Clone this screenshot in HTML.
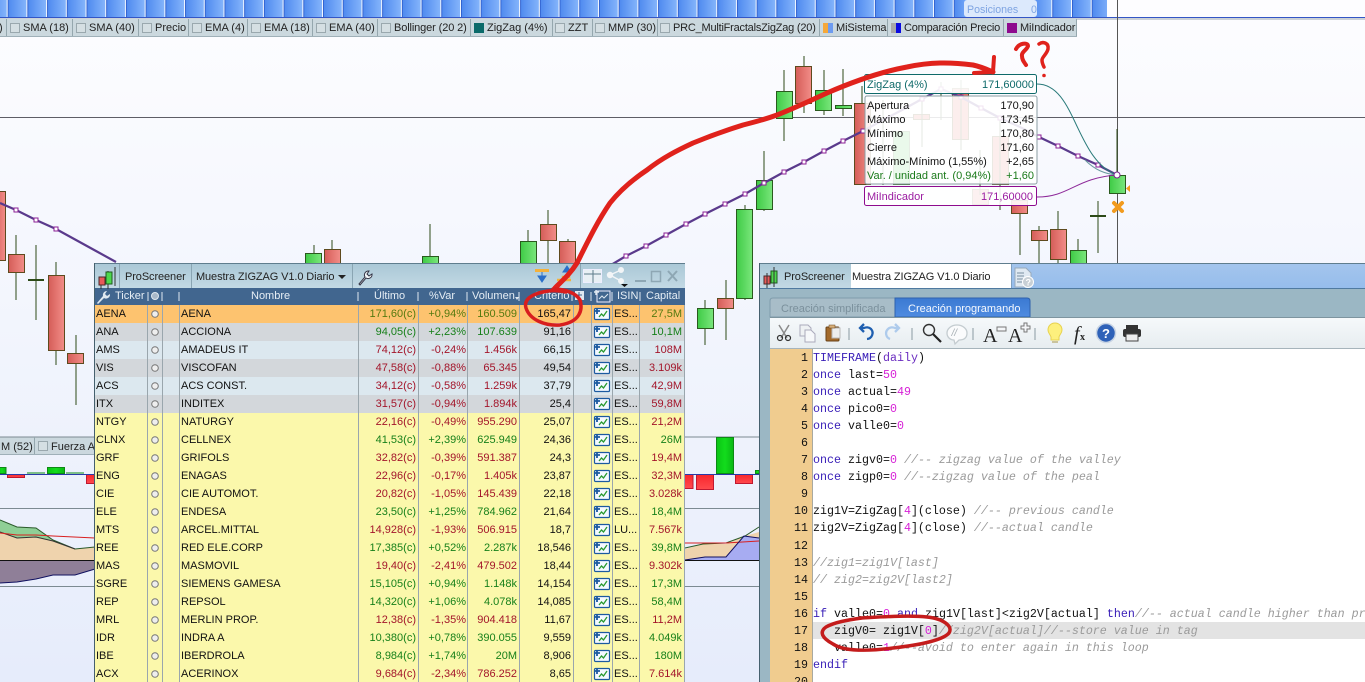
<!DOCTYPE html>
<html><head><meta charset="utf-8"><title>ProScreener</title>
<style>
html,body{margin:0;padding:0;background:#fff}
#p{position:relative;width:1365px;height:682px;overflow:hidden;font:11px "Liberation Sans",sans-serif;color:#111}
svg{position:absolute;left:0;top:0;display:block}
.tb{position:absolute;top:20px;height:17px;line-height:17px;white-space:nowrap;color:#222}
#l{position:absolute;left:95px;top:305px;width:590px;height:377px}
.r{position:absolute;left:0;width:590px;height:18px;line-height:18px;white-space:nowrap}
.r span{position:absolute;top:0}
.y{background:#fbf8ab}.g{background:#d3d7db}.b{background:#dce8ef}.o{background:#fdc36f}
.t{left:1px}.n{left:86px}.u{right:269px}.v{right:219px}.w{right:168px}.k{right:114px}.s{left:519px}.m{right:3px}
.up{color:#17801a}.dn{color:#a3152a}
.o .up{color:#557a10}
.hd{position:absolute;top:288px;height:17px;line-height:17px;color:#e6eef5;white-space:nowrap;font-size:11px}
pre{position:absolute;margin:0;font:11.67px/17.05px "Liberation Mono",monospace;color:#111}
.kw{color:#3a20b8}.nm{color:#d61fd6}.cm{color:#9a9a9a;font-style:italic}.pu{color:#6a2cc0}
#code{left:813px;top:350px;width:552px;height:332px;overflow:hidden}
#nums{left:770px;top:350px;width:38px;text-align:right}
</style></head><body><div id="p">
<svg width="1365" height="682" viewBox="0 0 1365 682" style="z-index:0">
<defs>
<linearGradient id="bg" x1="0" y1="0" x2="0" y2="1"><stop offset="0" stop-color="#fdfdff"/><stop offset="1" stop-color="#e6ecfb"/></linearGradient>
<linearGradient id="cg" x1="0" y1="0" x2="1" y2="0"><stop offset="0" stop-color="#3fcb46"/><stop offset="1" stop-color="#7ae67c"/></linearGradient>
<linearGradient id="cr" x1="0" y1="0" x2="1" y2="0"><stop offset="0" stop-color="#d55d58"/><stop offset="1" stop-color="#f28d88"/></linearGradient>
<linearGradient id="hg" x1="0" y1="0" x2="1" y2="0"><stop offset="0" stop-color="#0bc315"/><stop offset=".5" stop-color="#12dc1c"/><stop offset="1" stop-color="#0bb814"/></linearGradient>
<linearGradient id="hr" x1="0" y1="0" x2="0" y2="1"><stop offset="0" stop-color="#f8262c"/><stop offset="1" stop-color="#ff4a4e"/></linearGradient>
<linearGradient id="tile" x1="0" y1="0" x2="1" y2="0"><stop offset="0" stop-color="#4a86ee"/><stop offset="1" stop-color="#84b4fb"/></linearGradient>
<pattern id="tp" x="6.67" y="0" width="19.71" height="17" patternUnits="userSpaceOnUse"><rect width="19.71" height="17" fill="url(#tile)"/><rect x="0" width="1" height="17" fill="#f4f8ff"/><rect x="1" width=".9" height="17" fill="#2f5fcc"/></pattern>
</defs>
<rect width="1365" height="682" fill="url(#bg)"/>
<rect x="0" y="0" width="1107" height="17" fill="url(#tp)"/>
<rect x="0" y="17" width="1365" height="1" fill="#3356c6"/>
<rect x="0" y="18.5" width="1365" height="1" fill="#9aa6b0"/>
<rect x="0" y="19" width="1077" height="17" fill="#cbd8de"/>
<rect x="0" y="36" width="1077" height="1" fill="#9fb0b8"/>
<g fill="#95a7ae"><rect x="6" y="19" width="1" height="17"/><rect x="72" y="19" width="1" height="17"/><rect x="138" y="19" width="1" height="17"/><rect x="188" y="19" width="1" height="17"/><rect x="247" y="19" width="1" height="17"/><rect x="312" y="19" width="1" height="17"/><rect x="377" y="19" width="1" height="17"/><rect x="470" y="19" width="1" height="17"/><rect x="552" y="19" width="1" height="17"/><rect x="592" y="19" width="1" height="17"/><rect x="657" y="19" width="1" height="17"/><rect x="819" y="19" width="1" height="17"/><rect x="887" y="19" width="1" height="17"/><rect x="1003" y="19" width="1" height="17"/><rect x="1076" y="19" width="1" height="17"/></g>
<g fill="#d5dfe3" stroke="#9aa8ae"><rect x="10.5" y="23.500" width="9" height="9"/><rect x="76.5" y="23.5" width="9" height="9"/><rect x="142.5" y="23.5" width="9" height="9"/><rect x="192.5" y="23.5" width="9" height="9"/><rect x="251.5" y="23.5" width="9" height="9"/><rect x="316.5" y="23.5" width="9" height="9"/><rect x="381.5" y="23.5" width="9" height="9"/><rect x="555.5" y="23.5" width="9" height="9"/><rect x="595.5" y="23.5" width="9" height="9"/><rect x="660.5" y="23.5" width="9" height="9"/></g>
<rect x="474" y="23" width="10" height="10" fill="#0b6a6a"/>
<rect x="823" y="23" width="5" height="10" fill="#f5a83a"/><rect x="828" y="23" width="5" height="10" fill="#6d9bf0"/>
<rect x="891" y="23" width="5" height="10" fill="#a8a8a8"/><rect x="896" y="23" width="5" height="10" fill="#0a0ae0"/>
<rect x="1007" y="23" width="10" height="10" fill="#8e0b8e"/>
<!-- cursor lines -->
<rect x="0" y="117" width="1365" height="1" fill="#5d5d66"/>
<rect x="1117" y="0" width="1" height="264" fill="#555"/>
<!-- wicks -->
<g stroke="#2d4a18" stroke-width="1">
<path d="M16 235V300M36 245V320M56 262V365M76 335V405M314 245V264M332 240V264M430 224V264M528 230V264M548 210V264M568 239V264M745 205V300M726 280V340M705 300V345M764 151V211M784 70V141M804 56V113M824 70V115M843 69V116M862 86V184M1020 213V255M1039 226V264M1058 211V264M1078 239V264M1098 201V253M1117 129V193"/>
</g>
<!-- candles -->
<g stroke="#2a5a1e" fill="url(#cg)">
<rect x="736.5" y="209.5" width="16" height="89"/><rect x="697.5" y="308.5" width="16" height="20"/>
<rect x="756.5" y="180.5" width="16" height="29"/><rect x="776.5" y="91.5" width="16" height="27"/><rect x="815.5" y="90.5" width="16" height="20"/><rect x="835.5" y="105.5" width="16" height="3"/>
<rect x="520.5" y="241.5" width="16" height="30"/><rect x="305.5" y="253.5" width="16" height="20"/><rect x="422.5" y="256.5" width="16" height="15"/>
<rect x="1070.5" y="250.5" width="16" height="20"/><rect x="1109.5" y="175.5" width="16" height="18"/>
</g>
<g stroke="#5e4a1e" fill="url(#cr)">
<rect x="-6.5" y="191.5" width="12" height="69"/><rect x="8.5" y="254.5" width="16" height="18"/><rect x="48.5" y="275.5" width="16" height="75"/><rect x="67.5" y="353.5" width="16" height="10"/>
<rect x="324.5" y="249.5" width="16" height="20"/><rect x="540.5" y="224.5" width="16" height="16"/><rect x="559.5" y="241.5" width="16" height="30"/>
<rect x="717.5" y="298.5" width="16" height="10"/>
<rect x="795.5" y="66.5" width="16" height="37"/><rect x="854.5" y="103.5" width="16" height="81"/>
<rect x="1011.5" y="200.5" width="16" height="13"/><rect x="1031.5" y="230.5" width="16" height="10"/><rect x="1050.5" y="229.5" width="16" height="30"/>
</g>
<g stroke="#2d4a18"><path d="M1090 216H1106M28 280H44" stroke-width="2"/></g>
<!-- ghost candles below tooltip -->
<g fill="#54cc5a" stroke="#3a6a2a"><rect x="893.5" y="131.5" width="16" height="53"/></g>
<g fill="#e2736e" stroke="#5e4a1e"><rect x="913.5" y="114.5" width="16" height="5"/><rect x="952.5" y="88.5" width="16" height="51"/><rect x="992.5" y="136.5" width="16" height="48"/><rect x="972.5" y="189.5" width="16" height="15"/></g>
<path d="M922 96V147M961 80V150M980 150V195M1000 120V210M883 100V185M941 82V120" stroke="#2d4a18" fill="none"/>
<!-- zigzag line -->
<path d="M0 203L16 210L36 220L56 229L76 240L96 251L116 262M606 268L626 256L646 246L666 235L686 224L705 214L725 204L745 194L764 183L784 172L804 162L824 151L843 141L863 131L883 120L902 110L922 99L941 89L961 97L981 108L1000 118L1020 127L1039 137L1058 146L1078 156L1098 165L1117 175" fill="none" stroke="#5a3a8c" stroke-width="2.2"/>
<g fill="#fff" stroke="#8a1f96" stroke-width="1">
<rect x="14" y="208" width="4" height="4"/><rect x="34" y="218" width="4" height="4"/><rect x="54" y="227" width="4" height="4"/>
<rect x="624" y="254" width="4" height="4"/><rect x="644" y="244" width="4" height="4"/><rect x="664" y="233" width="4" height="4"/><rect x="684" y="222" width="4" height="4"/><rect x="703" y="212" width="4" height="4"/><rect x="723" y="202" width="4" height="4"/><rect x="743" y="192" width="4" height="4"/><rect x="762" y="181" width="4" height="4"/><rect x="782" y="170" width="4" height="4"/><rect x="802" y="160" width="4" height="4"/><rect x="822" y="149" width="4" height="4"/><rect x="841" y="139" width="4" height="4"/><rect x="861" y="129" width="4" height="4"/>
<rect x="920" y="97" width="4" height="4"/><rect x="939" y="87" width="4" height="4"/><rect x="959" y="95" width="4" height="4"/><rect x="979" y="106" width="4" height="4"/><rect x="998" y="116" width="4" height="4"/>
<rect x="1037" y="135" width="4" height="4"/><rect x="1056" y="144" width="4" height="4"/><rect x="1076" y="154" width="4" height="4"/><rect x="1096" y="163" width="4" height="4"/>
</g>
<path d="M1126 188.500l4-3.500v7z" fill="#f29b1e"/><path d="M1114 203L1122 211M1122 203L1114 211" stroke="#f29b1e" stroke-width="4" stroke-linecap="round"/>
<path d="M1037 84C1076 84 1075 160 1117 175" fill="none" stroke="#2a7a7a"/>
<path d="M1037 197C1070 197 1075 178 1117 175" fill="none" stroke="#8e2a9a"/>
<path d="M1085 160C1095 170 1105 174 1117 175" fill="none" stroke="#6a9aa0"/>
<circle cx="1117" cy="175" r="3" fill="#fff" stroke="#7a2090"/>
<!-- tooltips -->
<rect x="864.5" y="74.5" width="172" height="19" rx="2" fill="#fff" fill-opacity=".92" stroke="#0f6a6a"/>
<rect x="865" y="96" width="172" height="88" rx="2" fill="#fff" fill-opacity=".88" stroke="#8b9ea3"/>
<rect x="864.500" y="186.5" width="172" height="19" rx="2" fill="#fff" fill-opacity=".9" stroke="#8e0b8e"/>
<g font-family="Liberation Sans,sans-serif" font-size="11">
<text x="867" y="88" fill="#0f6a6a">ZigZag (4%)</text><text x="1034" y="88" fill="#0f6a6a" text-anchor="end">171,60000</text>
<g fill="#111"><text x="867" y="109">Apertura</text><text x="867" y="123">Máximo</text><text x="867" y="137">Mínimo</text><text x="867" y="151">Cierre</text><text x="867" y="165">Máximo-Mínimo (1,55%)</text></g>
<g fill="#111" text-anchor="end"><text x="1034" y="109">170,90</text><text x="1034" y="123">173,45</text><text x="1034" y="137">170,80</text><text x="1034" y="151">171,60</text><text x="1034" y="165">+2,65</text></g>
<text x="867" y="179" fill="#1a7a1a">Var. / unidad ant. (0,94%)</text><text x="1034" y="179" fill="#1a7a1a" text-anchor="end">+1,60</text>
<text x="867" y="200" fill="#9a1ba0">MiIndicador</text><text x="1033" y="200" fill="#9a1ba0" text-anchor="end">171,60000</text>
</g>
<rect x="964" y="0" width="73" height="17" rx="3" fill="#dce9fc"/>
<text x="967" y="13" font-size="10.6" fill="#7ea4e2" font-family="Liberation Sans,sans-serif">Posiciones</text><text x="1031" y="13" font-size="10.6" fill="#7ea4e2" font-family="Liberation Sans,sans-serif">0</text>
<!-- lower panels -->
<rect x="0" y="437" width="95" height="17" fill="#cbd8de"/><rect x="0" y="436.5" width="759" height="1" fill="#7c8a92"/>
<rect x="0" y="454" width="95" height="1" fill="#9fb0b8"/><rect x="34" y="437" width="1" height="17" fill="#95a7ae"/>
<rect x="38.5" y="441.5" width="9" height="9" fill="#d5dfe3" stroke="#9aa8ae"/>
<text x="1" y="450" font-size="11" fill="#222" font-family="Liberation Sans,sans-serif">M (52)</text><text x="51" y="450" font-size="11" fill="#222" font-family="Liberation Sans,sans-serif">Fuerza A</text>
<g stroke="#0c8a14"><rect x="-2" y="467.5" width="8" height="6" fill="url(#hg)"/><rect x="47.5" y="467.5" width="17" height="6" fill="url(#hg)"/><rect x="716.5" y="437.5" width="17" height="36" fill="url(#hg)"/><rect x="755.5" y="470.5" width="4" height="3" fill="url(#hg)"/><path d="M27 473H45M66 473H84" fill="none"/></g>
<g stroke="#c01830" fill="url(#hr)"><rect x="7.5" y="474.5" width="17" height="3"/><rect x="86.5" y="474.5" width="17" height="9"/><rect x="684" y="474.5" width="9" height="14"/><rect x="696.5" y="474.5" width="17" height="15"/><rect x="735.5" y="474.5" width="17" height="9"/></g>
<rect x="0" y="474" width="759" height="1" fill="#2a3aa8"/>
<rect x="0" y="508" width="759" height="1" fill="#7c8a92"/><rect x="0" y="586" width="759" height="1" fill="#7c8a92"/>
<!-- area left -->
<path d="M0 520L17 527L36 528L53 540L75 549L95 547L95 560L0 560Z" fill="#efd3ad"/>
<path d="M0 520L17 527L36 528L53 540L30 537L17 538L0 532Z" fill="#8fcf96"/>
<path d="M0 560L95 560L95 569L75 575L53 575L36 579L17 582L0 583Z" fill="#8f7f98"/>
<path d="M0 520L17 527L36 528L53 540L75 549L95 547" fill="none" stroke="#2a5a2a"/>
<path d="M0 532L17 538L36 537L53 541L75 549" fill="none" stroke="#333"/>
<path d="M0 533L17 535L36 535L53 536L95 538" fill="none" stroke="#d82020"/>
<path d="M0 583L17 582L36 579L53 575L75 575L95 569" fill="none" stroke="#101060"/>
<!-- area right -->
<path d="M685 549L703 544L726 544L745 536L759 532V538L745 536L726 557L705 557L685 560Z" fill="#efd3ad"/>
<path d="M685 560L705 557L726 557L744 536L759 538V560Z" fill="#a7acf2"/>
<path d="M685 548L703 544L726 543L745 536L759 527" fill="none" stroke="#2a5a2a"/>
<path d="M685 543L726 543L759 541" fill="none" stroke="#d82020"/>
<path d="M685 560L705 557L726 557L744 536L759 538" fill="none" stroke="#101060"/>
<rect x="0" y="560" width="759" height="1" fill="#111"/>
</svg>
<div class="tb" style="left:23px">SMA (18)</div><div class="tb" style="left:89px">SMA (40)</div><div class="tb" style="left:155px">Precio</div><div class="tb" style="left:205px">EMA (4)</div><div class="tb" style="left:264px">EMA (18)</div><div class="tb" style="left:329px">EMA (40)</div><div class="tb" style="left:394px;letter-spacing:-.12px">Bollinger (20 2)</div><div class="tb" style="left:487px">ZigZag (4%)</div><div class="tb" style="left:568px">ZZT</div><div class="tb" style="left:608px">MMP (30)</div><div class="tb" style="left:673px;letter-spacing:-.21px">PRC_MultiFractalsZigZag (20)</div><div class="tb" style="left:836px;letter-spacing:-.1px">MiSistema</div><div class="tb" style="left:904px;letter-spacing:-.2px">Comparación Precio</div><div class="tb" style="left:1020px;letter-spacing:-.15px">MiIndicador</div>
<div class="tb" style="left:-1px">)</div>

<!-- LIST WINDOW -->
<div style="position:absolute;left:94px;top:263px;width:591px;height:419px;background:#aec;border:0">
<svg width="591" height="419" style="position:absolute;left:0;top:0">
<defs><linearGradient id="tt" x1="0" y1="0" x2="0" y2="1"><stop offset="0" stop-color="#a9c7d6"/><stop offset="1" stop-color="#c2d9e4"/></linearGradient></defs>
<rect width="591" height="419" fill="#cdd"/>
<rect x="0" y="0" width="591" height="25" fill="url(#tt)"/><rect x="0" y="0" width="591" height="1" fill="#5f7d8e"/>
<rect x="25" y="1" width="1" height="24" fill="#8aa5b3"/><rect x="97" y="1" width="1" height="24" fill="#8aa5b3"/><rect x="258" y="1" width="1" height="24" fill="#8aa5b3"/><rect x="486" y="1" width="1" height="24" fill="#8aa5b3"/>
<rect x="0" y="25" width="591" height="17" fill="#41668f"/>
<rect x="0" y="0" width="1" height="419" fill="#45606e"/>
<!-- chart icon -->
<path d="M14 9V27M7 16V27M21 5V24" transform="translate(0 -1)" stroke="#333" fill="none"/>
<rect x="5" y="14" width="6" height="8" fill="#e85a5a" stroke="#4a2a2a"/><rect x="12" y="9" width="6" height="12" fill="#4dd84d" stroke="#1f5a1f"/>
<!-- wrench title -->
<path d="M265 21l6-7a4 4 0 0 1 4-6l-2 3 2 2 3-2a4 4 0 0 1-6 4l-6 7z" fill="#f4f8fa" stroke="#334" stroke-width="1"/>
<!-- top right icons -->
<rect x="441" y="6" width="14" height="3" fill="#f4b13a"/><path d="M448 9v7M444 13h8l-4 6z" fill="#2a6ec8" stroke="#2a6ec8"/>
<path d="M473 14v-4M469 9h8l-4-6z" fill="#2a6ec8" stroke="#2a6ec8"/><path d="M463 17h6v-3h6v-1M463 17h14" stroke="#f4b13a" stroke-width="2.5" fill="none"/>
<rect x="489.5" y="6.5" width="18" height="13" fill="#e8f0f4" stroke="#eef"/><path d="M490 11H507M499 7V20" stroke="#5d7c8a"/>
<circle cx="516" cy="12" r="3.2" fill="#f2f5f7"/><circle cx="527" cy="7" r="3" fill="#f2f5f7"/><circle cx="527" cy="18" r="3" fill="#f2f5f7"/><path d="M516 12L527 7M516 12L527 18" stroke="#f2f5f7" stroke-width="1.5"/><path d="M527 21h7l-3.500 3z" fill="#111"/>
<rect x="541" y="17" width="11" height="2" fill="#8ea7b4"/><rect x="557.5" y="8.5" width="9" height="10" fill="none" stroke="#8ea7b4" stroke-width="1.5"/>
<path d="M574 8L583 18M583 8L574 18" stroke="#8ea7b4" stroke-width="2"/>
<!-- header wrench -->
<path d="M3 40l6-7a4 4 0 0 1 4-5l-2 3 2 2 3-2a4 4 0 0 1-6 4l-6 6z" fill="#dfe8f0" stroke="none"/>
<path d="M54 29v9M68 29v9M85 29v9M264 29v9M324 29v9M373 29v9M425 29v9M478 29v9M497 29v9M518 29v9M546 29v9" stroke="#dfe8f0"/>
<circle cx="61" cy="33" r="3.500" fill="#a8b8c8" stroke="#dfe8f0"/>
<path d="M427 35h-4l2 3z" fill="#dfe8f0" transform="translate(-2 -1)"/>
<rect x="481" y="28" width="9" height="9" fill="#dfe8f0"/><path d="M485 29v7M481 32h7" stroke="#41668f"/>
<rect x="503" y="28" width="13" height="11" fill="#41668f" stroke="#eef"/><path d="M505 36l3-3 2 2 4-4" stroke="#dfe8f0" fill="none"/><path d="M502 27v5M500 29h5" stroke="#dfe8f0" stroke-width="1.5"/>
</svg>
</div>
<div class="tb" style="left:125px;top:269px;color:#222;letter-spacing:-.1px">ProScreener</div>
<div class="tb" style="left:196px;top:269px;color:#222;letter-spacing:-.11px">Muestra ZIGZAG V1.0 Diario</div>
<svg width="10" height="6" style="left:338px;top:275px"><path d="M0 0h8l-4 4z" fill="#222"/></svg>
<div class="hd" style="left:115px">Ticker</div><div class="hd" style="left:251px">Nombre</div><div class="hd" style="left:374px">Último</div><div class="hd" style="left:429px">%Var</div><div class="hd" style="left:472px">Volumen</div><div class="hd" style="left:534px">Criterio</div><div class="hd" style="left:617px">ISIN</div><div class="hd" style="left:646px">Capital</div>

<svg width="0" height="0" style="position:absolute"><defs>
<g id="ic"><rect x=".5" y=".5" width="15" height="11" rx="1" fill="#f4f9ff" stroke="#1c5aa0" stroke-width="1.2"/><path d="M5 9l2.500-3 2 2 3.500-5" fill="none" stroke="#2a9a30" stroke-width="1.3"/><path d="M3 0v6M0 3h6" stroke="#1c5aa0" stroke-width="1.800"/></g>
<g id="ci"><circle cx="4" cy="4" r="3.3" fill="#eee" stroke="#777"/></g></defs></svg>

<div id="l">
<div class="r o" style="top:0"><span class="t">AENA</span><span class="n">AENA</span><span class="u up">171,60(c)</span><span class="v up">+0,94%</span><span class="w up">160.509</span><span class="k">165,47</span><span class="s">ES...</span><span class="m up">27,5M</span></div>
<div class="r g" style="top:18px"><span class="t">ANA</span><span class="n">ACCIONA</span><span class="u up">94,05(c)</span><span class="v up">+2,23%</span><span class="w up">107.639</span><span class="k">91,16</span><span class="s">ES...</span><span class="m up">10,1M</span></div>
<div class="r b" style="top:36px"><span class="t">AMS</span><span class="n">AMADEUS IT</span><span class="u dn">74,12(c)</span><span class="v dn">-0,24%</span><span class="w dn">1.456k</span><span class="k">66,15</span><span class="s">ES...</span><span class="m dn">108M</span></div>
<div class="r g" style="top:54px"><span class="t">VIS</span><span class="n">VISCOFAN</span><span class="u dn">47,58(c)</span><span class="v dn">-0,88%</span><span class="w dn">65.345</span><span class="k">49,54</span><span class="s">ES...</span><span class="m dn">3.109k</span></div>
<div class="r b" style="top:72px"><span class="t">ACS</span><span class="n">ACS CONST.</span><span class="u dn">34,12(c)</span><span class="v dn">-0,58%</span><span class="w dn">1.259k</span><span class="k">37,79</span><span class="s">ES...</span><span class="m dn">42,9M</span></div>
<div class="r g" style="top:90px"><span class="t">ITX</span><span class="n">INDITEX</span><span class="u dn">31,57(c)</span><span class="v dn">-0,94%</span><span class="w dn">1.894k</span><span class="k">25,4</span><span class="s">ES...</span><span class="m dn">59,8M</span></div>
<div class="r y" style="top:108px"><span class="t">NTGY</span><span class="n">NATURGY</span><span class="u dn">22,16(c)</span><span class="v dn">-0,49%</span><span class="w dn">955.290</span><span class="k">25,07</span><span class="s">ES...</span><span class="m dn">21,2M</span></div>
<div class="r y" style="top:126px"><span class="t">CLNX</span><span class="n">CELLNEX</span><span class="u up">41,53(c)</span><span class="v up">+2,39%</span><span class="w up">625.949</span><span class="k">24,36</span><span class="s">ES...</span><span class="m up">26M</span></div>
<div class="r y" style="top:144px"><span class="t">GRF</span><span class="n">GRIFOLS</span><span class="u dn">32,82(c)</span><span class="v dn">-0,39%</span><span class="w dn">591.387</span><span class="k">24,3</span><span class="s">ES...</span><span class="m dn">19,4M</span></div>
<div class="r y" style="top:162px"><span class="t">ENG</span><span class="n">ENAGAS</span><span class="u dn">22,96(c)</span><span class="v dn">-0,17%</span><span class="w dn">1.405k</span><span class="k">23,87</span><span class="s">ES...</span><span class="m dn">32,3M</span></div>
<div class="r y" style="top:180px"><span class="t">CIE</span><span class="n">CIE AUTOMOT.</span><span class="u dn">20,82(c)</span><span class="v dn">-1,05%</span><span class="w dn">145.439</span><span class="k">22,18</span><span class="s">ES...</span><span class="m dn">3.028k</span></div>
<div class="r y" style="top:198px"><span class="t">ELE</span><span class="n">ENDESA</span><span class="u up">23,50(c)</span><span class="v up">+1,25%</span><span class="w up">784.962</span><span class="k">21,64</span><span class="s">ES...</span><span class="m up">18,4M</span></div>
<div class="r y" style="top:216px"><span class="t">MTS</span><span class="n">ARCEL.MITTAL</span><span class="u dn">14,928(c)</span><span class="v dn">-1,93%</span><span class="w dn">506.915</span><span class="k">18,7</span><span class="s">LU...</span><span class="m dn">7.567k</span></div>
<div class="r y" style="top:234px"><span class="t">REE</span><span class="n">RED ELE.CORP</span><span class="u up">17,385(c)</span><span class="v up">+0,52%</span><span class="w up">2.287k</span><span class="k">18,546</span><span class="s">ES...</span><span class="m up">39,8M</span></div>
<div class="r y" style="top:252px"><span class="t">MAS</span><span class="n">MASMOVIL</span><span class="u dn">19,40(c)</span><span class="v dn">-2,41%</span><span class="w dn">479.502</span><span class="k">18,44</span><span class="s">ES...</span><span class="m dn">9.302k</span></div>
<div class="r y" style="top:270px"><span class="t">SGRE</span><span class="n">SIEMENS GAMESA</span><span class="u up">15,105(c)</span><span class="v up">+0,94%</span><span class="w up">1.148k</span><span class="k">14,154</span><span class="s">ES...</span><span class="m up">17,3M</span></div>
<div class="r y" style="top:288px"><span class="t">REP</span><span class="n">REPSOL</span><span class="u up">14,320(c)</span><span class="v up">+1,06%</span><span class="w up">4.078k</span><span class="k">14,085</span><span class="s">ES...</span><span class="m up">58,4M</span></div>
<div class="r y" style="top:306px"><span class="t">MRL</span><span class="n">MERLIN PROP.</span><span class="u dn">12,38(c)</span><span class="v dn">-1,35%</span><span class="w dn">904.418</span><span class="k">11,67</span><span class="s">ES...</span><span class="m dn">11,2M</span></div>
<div class="r y" style="top:324px"><span class="t">IDR</span><span class="n">INDRA A</span><span class="u up">10,380(c)</span><span class="v up">+0,78%</span><span class="w up">390.055</span><span class="k">9,559</span><span class="s">ES...</span><span class="m up">4.049k</span></div>
<div class="r y" style="top:342px"><span class="t">IBE</span><span class="n">IBERDROLA</span><span class="u up">8,984(c)</span><span class="v up">+1,74%</span><span class="w up">20M</span><span class="k">8,906</span><span class="s">ES...</span><span class="m up">180M</span></div>
<div class="r y" style="top:360px"><span class="t">ACX</span><span class="n">ACERINOX</span><span class="u dn">9,684(c)</span><span class="v dn">-2,34%</span><span class="w dn">786.252</span><span class="k">8,65</span><span class="s">ES...</span><span class="m dn">7.614k</span></div>
<svg width="590" height="377" style="left:0;top:0">
<path d="M52.5 0V377M67.5 0V377M84.5 0V377M263.5 0V377M323.5 0V377M372.5 0V377M424.5 0V377M478.5 0V377M496.5 0V377M517.5 0V377M544.5 0V377M589.5 0V377" stroke="#9aa6ad" fill="none"/>
<use href="#ci" x="56" y="5"/><use href="#ci" x="56" y="23"/><use href="#ci" x="56" y="41"/><use href="#ci" x="56" y="59"/><use href="#ci" x="56" y="77"/><use href="#ci" x="56" y="95"/><use href="#ci" x="56" y="113"/><use href="#ci" x="56" y="131"/><use href="#ci" x="56" y="149"/><use href="#ci" x="56" y="167"/><use href="#ci" x="56" y="185"/><use href="#ci" x="56" y="203"/><use href="#ci" x="56" y="221"/><use href="#ci" x="56" y="239"/><use href="#ci" x="56" y="257"/><use href="#ci" x="56" y="275"/><use href="#ci" x="56" y="293"/><use href="#ci" x="56" y="311"/><use href="#ci" x="56" y="329"/><use href="#ci" x="56" y="347"/><use href="#ci" x="56" y="365"/>
<use href="#ic" x="499" y="3"/><use href="#ic" x="499" y="21"/><use href="#ic" x="499" y="39"/><use href="#ic" x="499" y="57"/><use href="#ic" x="499" y="75"/><use href="#ic" x="499" y="93"/><use href="#ic" x="499" y="111"/><use href="#ic" x="499" y="129"/><use href="#ic" x="499" y="147"/><use href="#ic" x="499" y="165"/><use href="#ic" x="499" y="183"/><use href="#ic" x="499" y="201"/><use href="#ic" x="499" y="219"/><use href="#ic" x="499" y="237"/><use href="#ic" x="499" y="255"/><use href="#ic" x="499" y="273"/><use href="#ic" x="499" y="291"/><use href="#ic" x="499" y="309"/><use href="#ic" x="499" y="327"/><use href="#ic" x="499" y="345"/><use href="#ic" x="499" y="363"/>
</svg>
</div>

<!-- EDITOR WINDOW -->
<svg width="606" height="419" style="left:759px;top:263px">
<defs><linearGradient id="et" x1="0" y1="0" x2="0" y2="1"><stop offset="0" stop-color="#a4c5ed"/><stop offset="1" stop-color="#96bdec"/></linearGradient>
<linearGradient id="et2" x1="0" y1="0" x2="0" y2="1"><stop offset="0" stop-color="#a9c7d6"/><stop offset="1" stop-color="#c2d9e4"/></linearGradient>
<linearGradient id="tb2" x1="0" y1="0" x2="0" y2="1"><stop offset="0" stop-color="#f6f9fb"/><stop offset="1" stop-color="#e7edf0"/></linearGradient>
<linearGradient id="tab" x1="0" y1="0" x2="0" y2="1"><stop offset="0" stop-color="#3b7ad2"/><stop offset="1" stop-color="#4f8be0"/></linearGradient></defs>
<rect width="606" height="419" fill="#9bb7c4"/>
<rect y="0" width="606" height="25" fill="url(#et)"/><rect x="0" y="0" width="92" height="25" fill="url(#et2)"/><rect x="0" y="0" width="606" height="1" fill="#5f7d8e"/>
<rect x="92" y="1" width="160" height="24" fill="#fff"/>
<rect x="252" y="1" width="1" height="24" fill="#7fa0c0"/>
<rect x="0" y="25" width="606" height="1" fill="#4f7aa0"/><rect x="0" y="0" width="1" height="419" fill="#45606e"/>
<!-- chart icon -->
<rect x="5" y="13" width="6" height="8" fill="#e85a5a" stroke="#4a2a2a"/><rect x="12" y="8" width="6" height="12" fill="#4dd84d" stroke="#1f5a1f"/><path d="M15 4V24M8 10V25" stroke="#333"/>
<!-- doc help -->
<path d="M256 5h11l5 5v14h-16z" fill="#dfe9f2" stroke="#9ab"/><path d="M258 10h7M258 13h7M258 16h7M258 19h7" stroke="#7a8fa0"/><circle cx="269" cy="19" r="5.5" fill="#c8d0d6" stroke="#fff"/><text x="266.5" y="22.5" font-size="9" font-weight="bold" fill="#fff" font-family="Liberation Sans,sans-serif">?</text>
<!-- tabs -->
<path d="M11 54V38q0-3 3-3H136V54Z" fill="#a8bdc8" stroke="#7f9cab"/>
<path d="M136 54V35H268q3 0 3 3V54Z" fill="url(#tab)" stroke="#2f62ad"/>
<text x="22" y="49" font-size="11" fill="#7b909c" font-family="Liberation Sans,sans-serif">Creación simplificada</text>
<text x="149" y="49" font-size="11" fill="#f4f8ff" font-family="Liberation Sans,sans-serif">Creación programando</text>
<rect x="11" y="54" width="595" height="31" fill="url(#tb2)"/><rect x="11" y="54" width="595" height="1" fill="#7d949f"/><rect x="11" y="85" width="595" height="1" fill="#a6b4bb"/>
<!-- gutter+content -->
<rect x="11" y="86" width="42" height="333" fill="#f0cc8f"/><rect x="53" y="86" width="553" height="333" fill="#fff"/><rect x="53" y="86" width="1" height="333" fill="#a9a9a0"/>
<rect x="54" y="359" width="552" height="17" fill="#e3e3e3"/>
<!-- toolbar icons -->
<g fill="none" stroke="#555"><path d="M20 62L28 75M30 62L22 75" stroke="#8a8a8a" stroke-width="1.5"/><circle cx="21" cy="75" r="2.5" stroke="#333" stroke-width="1.2"/><circle cx="29" cy="75" r="2.5" stroke="#333" stroke-width="1.2"/></g>
<path d="M41 62h8l3 3v8H41z" fill="#eef1f3" stroke="#aab"/><path d="M46 67h6l4 4v8H46z" fill="#f6f8fa" stroke="#aab"/>
<rect x="67" y="64" width="13" height="14" rx="1" fill="#a36a2b" stroke="#6a4318"/><rect x="73" y="65" width="8" height="10" fill="#eee" stroke="#bbb"/><rect x="70" y="62" width="6" height="3" fill="#d8b07a" stroke="#6a4318" stroke-width=".5"/>
<path d="M90 65v12" stroke="#8a9aa2"/>
<path d="M108 76a6 6 0 0 0 4-10c-2-2-5-2-7-1l-3 0m3-4l-4 4 4 4" fill="none" stroke="#1f5fb0" stroke-width="2.3"/>
<path d="M131 76a6 6 0 0 1-2-10c2-2 5-2 7-1l3 0m-3-4l4 4-4 4" fill="none" stroke="#aecbec" stroke-width="2.3"/>
<path d="M153 65v12" stroke="#8a9aa2"/>
<circle cx="170" cy="67" r="5.5" fill="none" stroke="#333" stroke-width="1.4"/><path d="M174 71l8 8" stroke="#222" stroke-width="2.2"/>
<path d="M198 62c-6 0-10 4-10 8s3 7 7 7l1 4 4-4c6 0 8-3 8-7s-4-8-10-8z" fill="#fafbfc" stroke="#c4ccd0" stroke-width="1.3"/><text x="192.5" y="73" font-size="10" font-style="italic" fill="#a5adb2" font-family="Liberation Sans,sans-serif">//</text>
<path d="M214 65v12" stroke="#8a9aa2"/>
<text x="224" y="79" font-size="20" fill="#222" font-family="Liberation Serif,serif">A</text><rect x="238" y="64" width="9" height="4" fill="#f4f6f8" stroke="#777"/>
<text x="249" y="79" font-size="20" fill="#222" font-family="Liberation Serif,serif">A</text><path d="M265 60h3v3h3v3h-3v3h-3v-3h-3v-3h3z" fill="#f4f6f8" stroke="#777"/>
<path d="M276 65v12" stroke="#8a9aa2"/>
<path d="M296 60c-4 0-7 3-7 7 0 3 2 4 3 7v3h8v-3c1-3 3-4 3-7 0-4-3-7-7-7z" fill="#fdf07d" stroke="#e7d24f"/><path d="M293 78h6v2h-6z" fill="#c9c39d"/>
<text x="315" y="77" font-size="20" font-style="italic" fill="#222" font-family="Liberation Serif,serif">f</text><text x="321" y="77" font-size="10" font-weight="bold" fill="#222" font-family="Liberation Serif,serif">x</text>
<circle cx="347" cy="70" r="9.5" fill="#2f62b8" stroke="#c8d4e4" stroke-width="1.5"/><text x="347" y="75" font-size="13" font-weight="bold" fill="#fff" text-anchor="middle" font-family="Liberation Sans,sans-serif">?</text>
<rect x="367" y="62" width="12" height="4" fill="#333"/><rect x="364" y="66" width="18" height="8" rx="2" fill="#333"/><rect x="367" y="71" width="12" height="7" fill="#eee" stroke="#444"/>
</svg>
<div class="tb" style="left:784px;top:269px;color:#222;letter-spacing:-.1px">ProScreener</div>
<div class="tb" style="left:852px;top:269px;color:#222;letter-spacing:-.11px">Muestra ZIGZAG V1.0 Diario</div>
<pre id="nums">1
2
3
4
5
6
7
8
9
10
11
12
13
14
15
16
17
18
19
20</pre>
<pre id="code"><span class="kw">TIMEFRAME</span>(<span class="pu">daily</span>)
<span class="kw">once</span> last=<span class="nm">50</span>
<span class="kw">once</span> actual=<span class="nm">49</span>
<span class="kw">once</span> pico0=<span class="nm">0</span>
<span class="kw">once</span> valle0=<span class="nm">0</span>

<span class="kw">once</span> zigv0=<span class="nm">0</span> <span class="cm">//-- zigzag value of the valley</span>
<span class="kw">once</span> zigp0=<span class="nm">0</span> <span class="cm">//--zigzag value of the peal</span>

zig1V=ZigZag[<span class="nm">4</span>](close) <span class="cm">//-- previous candle</span>
zig2V=ZigZag[<span class="nm">4</span>](close) <span class="cm">//--actual candle</span>

<span class="cm">//zig1=zig1V[last]</span>
<span class="cm">// zig2=zig2V[last2]</span>

<span class="kw">if</span> valle0=<span class="nm">0</span> <span class="kw">and</span> zig1V[last]&lt;zig2V[actual] <span class="kw">then</span><span class="cm">//-- actual candle higher than pr</span>
   zigV0= zig1V[<span class="nm">0</span>]<span class="cm">//zig2V[actual]//--store value in tag</span>
   valle0=<span class="nm">1</span><span class="cm">//--avoid to enter again in this loop</span>
<span class="kw">endif</span></pre>

<!-- RED ANNOTATIONS -->
<svg width="1365" height="682" style="z-index:5" fill="none" stroke-linecap="round" stroke-linejoin="round">
<path d="M555 288C563 280 570 274 577 263C587 243 597 222 610 203C622 188 635 178 647 170C662 158 678 150 693 143C710 136 727 130 743 125C755 122 766 119 777 115C795 108 812 100 827 93C850 83 880 72 907 67C930 62 950 62 973 65C982 67 988 70 993 72" stroke="#e0221c" stroke-width="5"/>
<path d="M974 73L993 72L994 57" stroke="#e0221c" stroke-width="4"/>
<path d="M553 289C565 289 576 293 580 300C583 310 580 322 560 325C545 326 530 320 526 308C523 298 535 293 548 291C556 290 562 291 566 292" stroke="#d81e1e" stroke-width="3.500"/>
<path d="M1016 49C1019 43 1028 42 1028 46C1027 50 1021 52 1022 56C1022 60 1024 62 1026 65" stroke="#e0221c" stroke-width="4"/>
<path d="M1039 44C1043 41 1049 43 1048 49C1047 54 1042 57 1042 60C1042 63 1043 65 1044 67" stroke="#e0221c" stroke-width="3.500"/>
<circle cx="1044" cy="75.5" r="1.800" fill="#e0221c" stroke="none"/>
<path d="M860 618C880 617 910 615 927 617C945 619 953 627 949 633C943 640 920 645 893 648C870 651 845 652 833 644C822 638 819 632 826 627C835 622 848 620 862 618" stroke="#c41c1c" stroke-width="3.500"/>
</svg>
</div></body></html>
